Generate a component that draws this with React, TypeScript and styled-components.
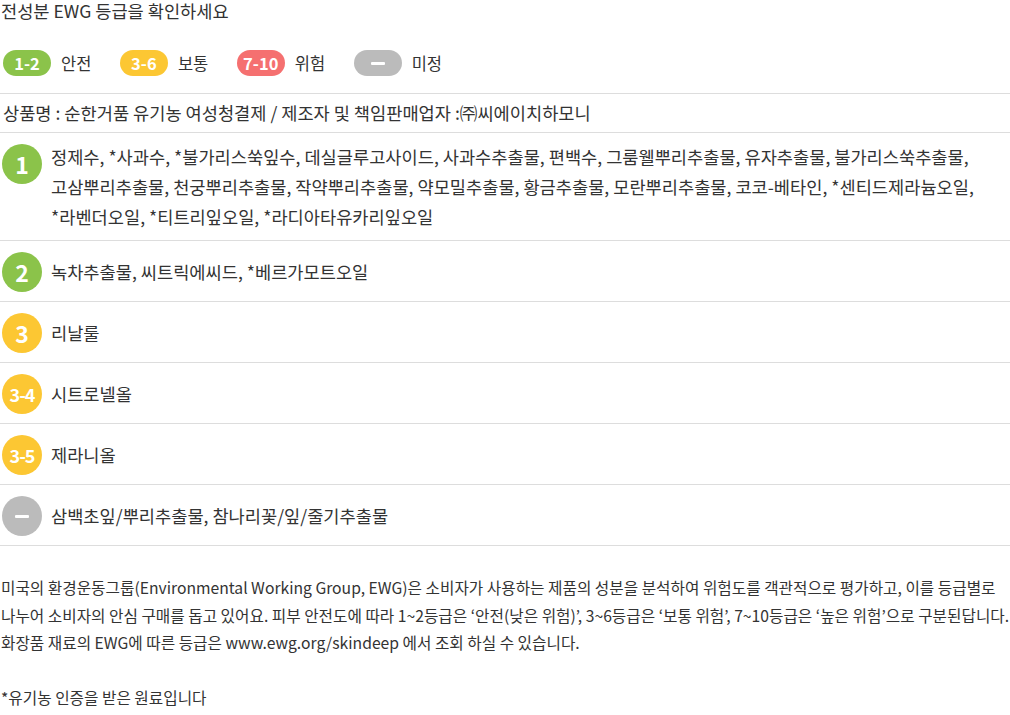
import React from "react";
import styled, { createGlobalStyle } from "styled-components";

const Global = createGlobalStyle`
  html, body { margin: 0; padding: 0; background: #fff; }
  body { font-family: "Noto Sans CJK KR", "Noto Sans", sans-serif; color: #333; }
`;

const Page = styled.div`
  width: 1010px;
  box-sizing: border-box;
`;

const Title = styled.h2`
  margin: 0;
  padding-left: 1px;
  font-size: 17.6px;
  font-weight: 400;
  line-height: 22px;
  color: #333;
`;

const Legend = styled.div`
  display: flex;
  align-items: center;
  gap: 28.5px;
  margin-top: 28px;
  padding: 0 0 17px 3px;
  border-bottom: 1px solid #ddd;
`;

const LegendItem = styled.div`
  display: flex;
  align-items: center;
  gap: 10px;
`;

const Pill = styled.span<{ $bg: string }>`
  display: inline-flex;
  align-items: center;
  justify-content: center;
  width: 48px;
  height: 26px;
  border-radius: 13px;
  background: ${(p) => p.$bg};
  color: #fff;
  font-size: 16.5px;
  font-weight: 700;
`;

const LegendLabel = styled.span`
  font-size: 16.5px;
  line-height: 26px;
`;

const ProductRow = styled.div`
  padding: 0 0 0 3px;
  font-size: 17.6px;
  line-height: 38px;
  border-bottom: 1px solid #ddd;
`;

const Row = styled.div`
  display: flex;
  align-items: flex-start;
  padding: 9px 0 8px;
  border-bottom: 1px solid #ddd;
`;

const Badge = styled.span<{ $bg: string; $small?: boolean }>`
  flex: 0 0 40px;
  width: 40px;
  height: 40px;
  margin: 2px 9px 0 2px;
  border-radius: 50%;
  background: ${(p) => p.$bg};
  color: #fff;
  display: flex;
  align-items: center;
  justify-content: center;
  font-weight: 700;
  font-size: ${(p) => (p.$small ? "18px" : "23px")};
  letter-spacing: ${(p) => (p.$small ? "-1px" : "0")};
`;

const Dash = styled.span`
  width: 14px;
  height: 3px;
  background: #fff;
  border-radius: 1px;
`;

const Ingredients = styled.div`
  flex: 1;
  min-height: 43px;
  display: flex;
  align-items: center;
  font-size: 17.6px;
  line-height: 30px;
  word-break: keep-all;
`;

const Item = styled.span`
  white-space: nowrap;
`;

const Note = styled.div`
  margin-top: 28px;
  padding-left: 1px;
  font-size: 15.7px;
  line-height: 27.5px;
`;

const Line = styled.span`
  display: block;
  white-space: nowrap;
`;

const Blank = styled.span`
  display: block;
  height: 27.5px;
`;

const GREEN = "#8bc34a";
const YELLOW = "#fcc733";
const RED = "#f57070";
const GRAY = "#bbbbbb";

const legend = [
  { label: "1-2", text: "안전", bg: GREEN },
  { label: "3-6", text: "보통", bg: YELLOW },
  { label: "7-10", text: "위험", bg: RED },
  { label: "", text: "미정", bg: GRAY },
];

const rows = [
  {
    grade: "1",
    bg: GREEN,
    items: [
      "정제수", "*사과수", "*불가리스쑥잎수", "데실글루고사이드", "사과수추출물", "편백수",
      "그룸웰뿌리추출물", "유자추출물", "불가리스쑥추출물", "고삼뿌리추출물", "천궁뿌리추출물",
      "작약뿌리추출물", "약모밀추출물", "황금추출물", "모란뿌리추출물", "코코-베타인",
      "*센티드제라늄오일", "*라벤더오일", "*티트리잎오일", "*라디아타유카리잎오일",
    ],
  },
  { grade: "2", bg: GREEN, items: ["녹차추출물", "씨트릭에씨드", "*베르가모트오일"] },
  { grade: "3", bg: YELLOW, items: ["리날룰"] },
  { grade: "3-4", bg: YELLOW, items: ["시트로넬올"] },
  { grade: "3-5", bg: YELLOW, items: ["제라니올"] },
  { grade: "", bg: GRAY, items: ["삼백초잎/뿌리추출물", "참나리꽃/잎/줄기추출물"] },
];

export default function App() {
  return (
    <Page>
      <Global />
      <Title>전성분 EWG 등급을 확인하세요</Title>
      <Legend>
        {legend.map((l) => (
          <LegendItem key={l.text}>
            <Pill $bg={l.bg}>{l.label ? l.label : <Dash />}</Pill>
            <LegendLabel>{l.text}</LegendLabel>
          </LegendItem>
        ))}
      </Legend>
      <ProductRow>
        상품명 : 순한거품 유기농 여성청결제 / 제조자 및 책임판매업자 :㈜씨에이치하모니
      </ProductRow>
      {rows.map((r, i) => (
        <Row key={i}>
          <Badge $bg={r.bg} $small={r.grade.length > 1}>
            {r.grade ? r.grade : <Dash />}
          </Badge>
          <Ingredients>
            <span>
              {r.items.map((it, j) => (
                <React.Fragment key={j}>
                  <Item>{j < r.items.length - 1 ? `${it},` : it}</Item>
                  {j < r.items.length - 1 ? " " : null}
                </React.Fragment>
              ))}
            </span>
          </Ingredients>
        </Row>
      ))}
      <Note>
        <Line>
          미국의 환경운동그룹(Environmental Working Group, EWG)은 소비자가 사용하는 제품의 성분을 분석하여 위험도를 객관적으로 평가하고, 이를 등급별로
        </Line>
        <Line>
          나누어 소비자의 안심 구매를 돕고 있어요. 피부 안전도에 따라 1~2등급은 ‘안전(낮은 위험)’, 3~6등급은 ‘보통 위험’, 7~10등급은 ‘높은 위험’으로 구분된답니다.
        </Line>
        <Line>화장품 재료의 EWG에 따른 등급은 www.ewg.org/skindeep 에서 조회 하실 수 있습니다.</Line>
        <Blank />
        <Line>*유기농 인증을 받은 원료입니다</Line>
      </Note>
    </Page>
  );
}
